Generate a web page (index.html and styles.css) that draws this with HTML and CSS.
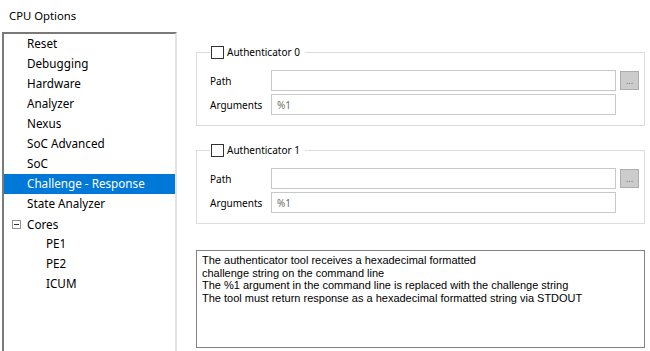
FILE: index.html
```html
<!DOCTYPE html>
<html lang="en">
<head>
  <meta charset="UTF-8" />
  <title>CPU Options</title>
  <link rel="stylesheet" href="styles.css">
</head>
<body>
  <div class="title">CPU Options</div>
  <div class="main">
    <ul class="tree">
      <li>Reset</li>
      <li>Debugging</li>
      <li>Hardware</li>
      <li>Analyzer</li>
      <li>Nexus</li>
      <li>SoC Advanced</li>
      <li>SoC</li>
      <li class="selected">Challenge - Response</li>
      <li>State Analyzer</li>
      <li class="node"><span class="toggle"></span>Cores</li>
      <li class="child">PE1</li>
      <li class="child">PE2</li>
      <li class="child">ICUM</li>
    </ul>

    <div class="content">
      <fieldset class="group">
        <legend><input type="checkbox" class="check"> Authenticator 0</legend>
        <div class="row">
          <label>Path</label>
          <input type="text" class="field" value="">
          <button class="browse">...</button>
        </div>
        <div class="row">
          <label>Arguments</label>
          <input type="text" class="field" value="%1">
        </div>
      </fieldset>

      <fieldset class="group">
        <legend><input type="checkbox" class="check"> Authenticator 1</legend>
        <div class="row">
          <label>Path</label>
          <input type="text" class="field" value="">
          <button class="browse">...</button>
        </div>
        <div class="row">
          <label>Arguments</label>
          <input type="text" class="field" value="%1">
        </div>
      </fieldset>

      <div class="info">
        The authenticator tool receives a hexadecimal formatted<br>
        challenge string on the command line<br>
        The %1 argument in the command line is replaced with the challenge string<br>
        The tool must return response as a hexadecimal formatted string via STDOUT
      </div>
    </div>
  </div>
</body>
</html>
```

FILE: styles.css
```css
:root {
  --ui-font: "Noto Sans", "Open Sans", sans-serif;
  --select: #0078d7;
  --group-line: #dcdcdc;
  --field-line: #c8c8c8;
}
* { box-sizing: border-box; margin: 0; padding: 0; }
body {
  background: #fff;
  font-family: var(--ui-font);
  font-size: 11.7px;
  color: #000;
  width: 650px; height: 351px;
  overflow: hidden;
}
.title {
  height: 32px;
  padding-left: 9px;
  line-height: 32px;
  font-size: 11.3px;
}
.main { display: flex; height: 319px; }

/* tree on the left */
.tree {
  list-style: none;
  width: 175px;
  margin-left: 2px;
  border-top: 2px solid #7a7a7a;
  border-left: 2px solid #7a7a7a;
  border-right: 2px solid #e3e3e3;
}
.tree li {
  height: 20px;
  line-height: 19px;
  padding-left: 23px;
  white-space: nowrap;
}
.tree li.selected { background: var(--select); color: #fff; }
.tree li.child { padding-left: 42px; }
.tree li.node { display: flex; align-items: center; padding-left: 8px; }
.toggle {
  width: 9px; height: 9px;
  border: 1px solid #919191;
  margin-right: 6px;
  display: flex; align-items: center; justify-content: center;
}
.toggle::after {
  content: "";
  width: 5px; height: 1px;
  background: #333;
}

/* right side */
.content {
  flex: 1;
  padding: 13px 5px 0 19px;
  display: flex; flex-direction: column;
  font-size: 10px;
}
.group {
  border: 1px solid var(--group-line);
  padding: 11px 0 10px 0;
  min-width: 0;
  margin-bottom: 17px;
}
.group legend {
  margin-left: 13px;
  padding: 0 5px 0 1px;
  display: flex; align-items: center; gap: 3px;
  line-height: 14px;
}
.check {
  appearance: none;
  width: 13px; height: 13px;
  border: 1px solid #333;
  background: #fff;
}
.row {
  display: flex; align-items: center;
  height: 21px;
}
.row + .row { margin-top: 3px; }
.row label { width: 74px; padding-left: 13px; }
.field {
  width: 345px; height: 21px;
  border: 1px solid var(--field-line);
  font-family: var(--ui-font);
  font-size: 10px;
  color: #6d6d6d;
  padding: 0 5px;
  outline: none;
}
.browse {
  width: 19px; height: 19px;
  margin-left: 4px;
  background: #cccccc;
  border: 1px solid #adadad;
  color: #707070;
  font-size: 9px;
  line-height: 17px;
  font-family: var(--ui-font);
}
.info {
  margin-top: 9px;
  height: 98px;
  border: 1px solid #828282;
  padding: 3px 5px;
  font-family: "Liberation Sans", Arial, sans-serif;
  font-size: 11px;
  line-height: 12.6px;
}
```
